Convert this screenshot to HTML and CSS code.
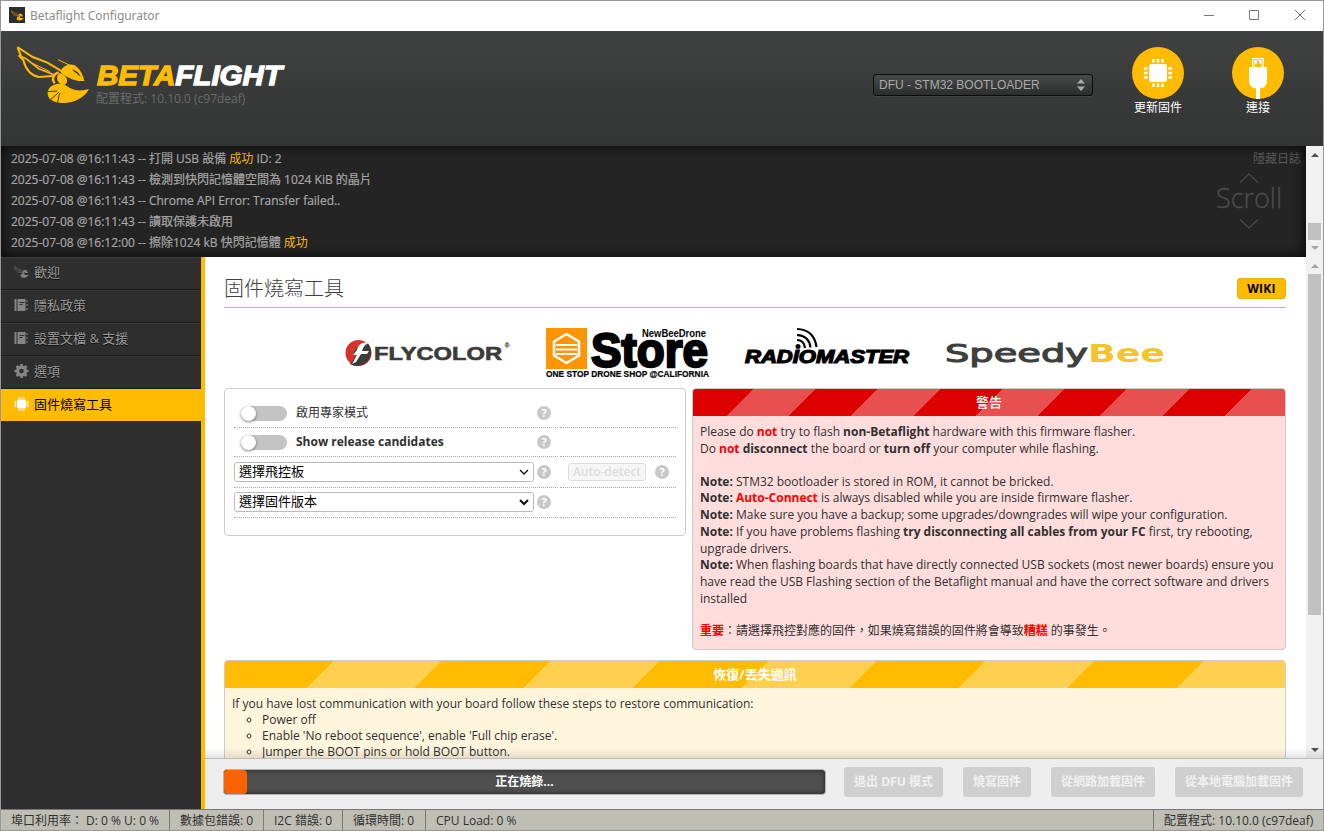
FILE: index.html
```html
<!DOCTYPE html>
<html lang="zh-Hant">
<head>
<meta charset="utf-8">
<title>Betaflight Configurator</title>
<link rel="stylesheet" href="styles.css">
</head>
<body>
<svg class="defs" aria-hidden="true">
  <symbol id="bee" viewBox="48 135 222 180">
    <g fill="none" stroke="currentColor" stroke-width="6" stroke-linejoin="miter">
      <path d="M53 143L62 166L58 168L70 180C76 205 92 226 116 231L158 228"/>
      <path d="M52 141L98 171L142 188L186 214"/>
      <path d="M60 168L78 176L116 206L162 224" stroke-width="5"/>
      <path d="M98 190L150 215" stroke-width="3"/>
      <path d="M174 179L212 197" stroke-width="3"/>
      <path d="M164 250C154 238 160 222 176 217" stroke-width="7"/>
    </g>
    <g fill="currentColor">
      <path fill-rule="evenodd" d="M186 206C200 192 218 190 230 200C243 211 250 226 253 243C236 244 220 241 207 233L190 226L182 216ZM216 209L242 230C238 219 229 210 216 209Z"/>
      <path d="M180 218L194 228C206 238 202 250 192 256C168 250 166 228 180 218Z"/>
      <path d="M143 276C148 252 178 247 194 254L210 264C226 273 246 273 267 267C254 292 226 309 188 309C160 309 140 296 143 276Z"/>
    </g>
    <g fill="none" stroke="var(--cut)" stroke-width="3"><path d="M142 275L172 273M152 299L176 277M172 310L179 280"/></g>
  </symbol>
  <symbol id="chip" viewBox="0 0 28 28">
    <rect x="5" y="5" width="18" height="18" rx="2" fill="currentColor"/>
    <path d="M9.500 0v28M14 0v28M18.500 0v28M0 9.500h28M0 14h28M0 18.500h28" stroke="currentColor" stroke-width="2.600" stroke-dasharray="3.600 20.800 3.600"/>
  </symbol>
  <symbol id="book" viewBox="0 0 14 14">
    <path fill="currentColor" d="M0 1h2v12H0zM3 1h8v12H3zM12 2h1v2h-1zM12 6h1v2h-1zM12 10h1v2h-1z"/>
    <path d="M5 4.500h5M5 6.500h3" stroke="#2e2e2e"/>
  </symbol>
  <symbol id="gear" viewBox="0 0 14 14">
    <circle cx="7" cy="7" r="3.900" fill="none" stroke="currentColor" stroke-width="3.200"/>
    <path d="M7 0v3M7 11v3M0 7h3M11 7h3M2 2l2 2M10 10l2 2M12 2l-2 2M4 10l-2 2" stroke="currentColor" stroke-width="2.600"/>
  </symbol>
</svg>
<div class="window">
  <div class="titlebar">
    <span class="app-icon"><svg><use href="#bee"/></svg></span>
    <span class="app-title">Betaflight Configurator</span>
    <svg class="win-buttons" width="104" height="12" viewBox="0 0 104 12" fill="none" stroke="#777">
      <path d="M0 6.500h10M45.500 1.500h9v9h-9zM91 1l10 10M101 1L91 11"/>
    </svg>
  </div>

  <header class="header">
    <svg class="logo-bee"><use href="#bee"/></svg>
    <div class="brand">
      <svg class="wordmark" width="190" height="25" viewBox="0 0 190 25">
        <text x="1" y="22" textLength="185" lengthAdjust="spacingAndGlyphs"><tspan fill="#ffbb00" stroke="#ffbb00">BETA</tspan><tspan fill="#fff" stroke="#fff">FLIGHT</tspan></text>
      </svg>
      <div class="version">配置程式: 10.10.0 (c97deaf)</div>
    </div>
    <div class="port"><span>DFU - STM32 BOOTLOADER</span>
      <svg width="8" height="12" viewBox="0 0 8 12" fill="#aaa"><path d="M4 0L8 4.500H0zM4 12L0 7.500h8z"/></svg>
    </div>
    <div class="action action-flash"><span class="round"><svg width="28" height="28"><use href="#chip"/></svg></span>更新固件</div>
    <div class="action"><span class="round">
      <svg width="52" height="52" viewBox="0 0 52 52"><path fill="none" stroke="#fff" stroke-width="1.300" d="M20.700 21v-9.400h10.600V21"/><path fill="none" stroke="#fff" stroke-opacity=".7" d="M22.500 20v-6.500h7V20"/><path fill="#fff" d="M22.500 14h2.500v2.500h-2.500zM27 14h2.500v2.500H27zM17 20h18v13q0 8-7 8.500V52h-4V41.500q-7-.5-7-8.500z"/></svg>
    </span>連接</div>
  </header>

  <section class="log">
    <div class="log-lines">
      <p>2025-07-08 @16:11:43 -- 打開 USB 設備 <em>成功</em> ID: 2</p>
      <p>2025-07-08 @16:11:43 -- 檢測到快閃記憶體空間為 1024 KiB 的晶片</p>
      <p>2025-07-08 @16:11:43 -- Chrome API Error: Transfer failed..</p>
      <p>2025-07-08 @16:11:43 -- 讀取保護未啟用</p>
      <p>2025-07-08 @16:12:00 -- 擦除1024 kB 快閃記憶體 <em>成功</em></p>
    </div>
    <div class="log-side">
      <span class="log-hide">隱藏日誌</span>
      <div class="log-scroll">
        <svg width="20" height="10" viewBox="0 0 20 10"><path d="M1 9.500L10 1l9 8.500"/></svg>
        <span>Scroll</span>
        <svg width="20" height="10" viewBox="0 0 20 10"><path d="M1 .5L10 9l9-8.500"/></svg>
      </div>
    </div>
    <div class="scrollbar log-bar"><i class="up dark"></i><b></b><i class="down"></i></div>
  </section>

  <div class="middle">
    <nav class="sidebar">
      <a><svg><use href="#bee"/></svg>歡迎</a>
      <a><svg><use href="#book"/></svg>隱私政策</a>
      <a><svg><use href="#book"/></svg>設置文檔 &amp; 支援</a>
      <a><svg><use href="#gear"/></svg>選項</a>
      <a class="active"><svg><use href="#chip"/></svg>固件燒寫工具</a>
    </nav>
    <main class="main">
      <div class="viewport">
        <div class="content">
          <div class="heading"><h1>固件燒寫工具</h1><span class="wiki">WIKI</span></div>
          <div class="sponsors">
            <svg width="166" height="30" viewBox="0 0 166 30">
              <circle cx="13.500" cy="15" r="13" fill="#d63426"/>
              <path fill="#3c3d3b" d="M25 9C29 18 22 28 12 28C9 28 7 27 5 26L12 17L8 16C12 9 16 4 23 5z"/>
              <path fill="#fff" d="M24 5C17 3 13 7 12 12L8 17H12L7 26L11 24L16 16H22L24 13H17Q19 6 24 5z"/>
              <text class="flycolor" x="29" y="22" textLength="128" lengthAdjust="spacingAndGlyphs">FLYCOLOR</text>
              <text class="reg" x="159.500" y="10">®</text>
            </svg>
            <svg width="164" height="51" viewBox="0 0 164 51">
              <path fill="#ff9500" d="M0 0h41v41H0z"/>
              <path fill="none" stroke="#fff" stroke-width="2.600" stroke-linejoin="round" d="M20.500 6l12.500 7.500v14L20.500 35L8 27.500v-14z"/>
              <path stroke="#fff" stroke-width="2" d="M10 17h21M10 21.500h21M10 26h21"/>
              <text class="store" x="45" y="38.500" textLength="117" lengthAdjust="spacingAndGlyphs">Store</text>
              <text class="newbee" x="96" y="8.500" textLength="64" lengthAdjust="spacingAndGlyphs">NewBeeDrone</text>
              <text class="tag" x="0" y="49" textLength="163" lengthAdjust="spacingAndGlyphs">ONE STOP DRONE SHOP @CALIFORNIA</text>
            </svg>
            <svg width="168" height="50" viewBox="0 0 168 50">
              <text class="radio" x="0" y="35" textLength="164" lengthAdjust="spacingAndGlyphs">RADIOMASTER</text>
              <circle cx="53" cy="18.500" r="2.500"/>
              <path fill="none" stroke="#000" stroke-width="2.200" d="M52 12Q59 12 60 20M52 7Q64 7.500 65.500 19.500M52 1Q69 1.500 71.500 19"/>
            </svg>
            <svg width="220" height="34" viewBox="0 0 220 34">
              <text class="speedy" x="-3" y="26" textLength="143" lengthAdjust="spacingAndGlyphs">Speedy</text>
              <text class="yellow" x="140" y="26" textLength="77" lengthAdjust="spacingAndGlyphs">Bee</text>
            </svg>
          </div>

          <div class="columns">
            <section class="options">
              <div class="row"><div class="cell"><span class="toggle"></span><span class="label">啟用專家模式</span><span class="help">?</span></div><div class="cell"></div></div>
              <div class="row"><div class="cell"><span class="toggle"></span><span class="label"><b>Show release candidates</b></span><span class="help">?</span></div><div class="cell"></div></div>
              <div class="row tall"><div class="cell"><span class="select">選擇飛控板<svg width="10" height="8" viewBox="0 0 10 8"><path d="M1 2l4 4 4-4" stroke-width="1.300"/></svg></span><span class="help">?</span></div><div class="cell"><span class="auto">Auto-detect</span><span class="help">?</span></div></div>
              <div class="row last"><div class="cell"><span class="select">選擇固件版本<svg width="10" height="8" viewBox="0 0 10 8"><path d="M1 2l4 4 4-4" stroke-width="2"/></svg></span><span class="help">?</span></div><div class="cell"></div></div>
            </section>
            <section class="note warning">
              <h2>警告</h2>
              <div class="note-body">
                <p>Please do <strong class="red">not</strong> try to flash <strong>non-Betaflight</strong> hardware with this firmware flasher.<br>
                Do <strong class="red">not</strong> <strong>disconnect</strong> the board or <strong>turn off</strong> your computer while flashing.</p>
                <p><strong>Note:</strong> STM32 bootloader is stored in ROM, it cannot be bricked.<br>
                <strong>Note:</strong> <strong class="red">Auto-Connect</strong> is always disabled while you are inside firmware flasher.<br>
                <strong>Note:</strong> Make sure you have a backup; some upgrades/downgrades will wipe your configuration.<br>
                <strong>Note:</strong> If you have problems flashing <strong>try disconnecting all cables from your FC</strong> first, try rebooting,<br>upgrade drivers.<br>
                <strong>Note:</strong> When flashing boards that have directly connected USB sockets (most newer boards) ensure you<br>have read the USB Flashing section of the Betaflight manual and have the correct software and drivers<br>installed</p>
                <p><strong class="red">重要</strong>：請選擇飛控對應的固件，如果燒寫錯誤的固件將會導致<strong class="red">糟糕</strong> 的事發生。</p>
              </div>
            </section>
          </div>
          <section class="note recovery">
            <h2>恢復/丟失通訊</h2>
            <div class="note-body">If you have lost communication with your board follow these steps to restore communication:
              <ul><li>Power off</li><li>Enable 'No reboot sequence', enable 'Full chip erase'.</li><li>Jumper the BOOT pins or hold BOOT button.</li></ul>
            </div>
          </section>
        </div>
        <div class="scrollbar main-bar"><i class="up"></i><b></b><i class="down dark"></i></div>
        <div class="fade"></div>
      </div>
      <div class="toolbar">
        <div class="progress"><span class="progress-fill"></span><span class="progress-label">正在燒錄...</span></div>
        <span class="btn b1">退出 DFU 模式</span><span class="btn b2">燒寫固件</span><span class="btn b3">從網路加載固件</span><span class="btn b4">從本地電腦加載固件</span>
      </div>
    </main>
  </div>
  <footer class="status">
    <span class="s1">埠口利用率： D: 0 % U: 0 %</span><span class="s2">數據包錯誤: 0</span><span class="s3">I2C 錯誤: 0</span><span class="s4">循環時間: 0</span><span class="s5">CPU Load: 0 %</span><span class="s6">配置程式: 10.10.0 (c97deaf)</span>
  </footer>
</div>
</body>
</html>
```
FILE: styles.css
```css
* { box-sizing: border-box; }
body { margin: 0; font: 12px/17px "Open Sans", "Noto Sans CJK TC", sans-serif; color: #303030; overflow: hidden; }
p, h1, h2, ul { margin: 0; padding: 0; }
.defs { position: absolute; width: 0; height: 0; }
.window { --cut: #3b3d3c; width: 1324px; height: 831px; border: 1px solid #9b9799; display: flex; flex-direction: column; background: #fff; }

.titlebar { height: 30px; display: flex; align-items: center; padding: 0 15px 2px 8px; color: #8c8c8c; }
.app-icon { width: 16px; height: 16px; background: #2c2c2c; color: #fb0; display: flex; align-items: center; justify-content: center; }
.app-icon svg { width: 13px; height: 11px; }
.app-title { font: 12px/16px "Noto Sans", sans-serif; margin-left: 5px; padding-top: 1px; flex: 1; letter-spacing: -.05px; }

.header { height: 115px; background: linear-gradient(#3f4241, #333434); display: flex; padding: 15px 39px 0 15px; }
.logo-bee { width: 74px; height: 60px; color: #fb0; flex: none; margin-top: -1px; }
.brand { width: 500px; padding: 17px 0 0 6px; }
.wordmark { display: block; overflow: visible; }
.wordmark text { font: italic bold 28px "Liberation Sans", sans-serif; stroke-width: 1.3px; }
.version { color: #6b6b6b; line-height: 17px; margin-top: 2px; }
.port { margin: 28px 39px 0 auto; width: 220px; height: 22px; border: 1px solid #0c0c0c; border-radius: 3px; background: linear-gradient(#484a49, #2c2e2d); color: #a9a9a9; display: flex; align-items: center; justify-content: space-between; padding: 0 7px 0 5px; font: 12px "Liberation Sans", sans-serif; box-shadow: 0 1px 0 rgba(255,255,255,.06); }
.action { width: 52px; color: #fff; text-align: center; white-space: nowrap; line-height: 18px; }
.action-flash { margin-right: 48px; }
.round { width: 52px; height: 52px; margin-top: 1px; border-radius: 50%; background: #fb0; display: flex; align-items: center; justify-content: center; }

.log { height: 111px; background: #242424; color: #a8a8a8; display: flex; position: relative; }
.log::after { content: ""; position: absolute; inset: 0 17px 0 0; box-shadow: inset 0 0 12px 2px rgba(0,0,0,.7); }
.log-lines { padding: 2px 0 0 10px; flex: 1; -webkit-text-stroke: .2px; }
.log-lines p { line-height: 21px; height: 21px; }
.log em { font-style: normal; color: #fb0; -webkit-text-stroke: 0; }
.log-side { width: 90px; display: flex; flex-direction: column; align-items: flex-end; color: #5d5d5d; padding: 4px 5px 0 0; }
.log-scroll { width: 66px; display: flex; flex-direction: column; align-items: center; margin: 6px 19px 0 0; color: #4c4c4c; }
.log-scroll svg { fill: none; stroke: #4a4a4a; stroke-width: 1.2; }
.log-scroll span { font: 300 27px/28px "Open Sans", sans-serif; padding: 1px 0 7px; -webkit-text-stroke: .3px; }

.scrollbar { width: 17px; background: #f1f1f1; display: flex; flex-direction: column; align-items: center; flex: none; }
.scrollbar b { width: 13px; background: #c1c1c1; }
.scrollbar i { border: 4px solid transparent; color: #a3a3a3; width: 0; height: 0; }
.scrollbar .dark { color: #505050; }
.scrollbar .up { border-bottom-color: currentColor; border-top: 0; }
.scrollbar .down { border-top-color: currentColor; border-bottom: 0; }
.log-bar { padding-top: 7px; }
.log-bar b { height: 17px; margin: 66px 0 6px; }
.main-bar { padding-top: 7px; }
.main-bar b { height: 341px; margin: 6px 0 133px; }

.middle { height: 552px; display: flex; }
.sidebar { width: 204px; background: #2e2e2e; border-right: 4px solid #fb0; }
.sidebar a { --cut: #2e2e2e; height: 33px; display: flex; align-items: center; padding: 0 0 3px 13px; gap: 5px; font-size: 13px; color: #999; border-bottom: 1px solid #1d1d1d; border-top: 1px solid #393939; text-shadow: 0 1px rgba(0,0,0,.7); }
.sidebar svg { width: 15px; height: 14px; color: #858585; }
.sidebar .active { height: 32px; padding-bottom: 2px; background: #fb0; color: #000; border: 0; text-shadow: none; }
.sidebar .active svg { color: #fff; }
.main { width: 1118px; display: flex; flex-direction: column; }
.viewport { height: 501px; display: flex; position: relative; overflow: hidden; }
.content { width: 1101px; padding: 20px 20px 0 19px; }
.fade { position: absolute; inset: auto 0 0 0; height: 10px; background: linear-gradient(transparent, rgba(0,0,0,.10)); }
.heading { height: 31px; border-bottom: 1px solid #fb0; display: flex; justify-content: space-between; align-items: flex-start; }
h1 { font: 300 20px/22px "Open Sans", "Noto Sans CJK TC", sans-serif; color: #404040; padding-top: 1px; }
.wiki { width: 49px; height: 21px; margin-top: 1px; border: 1px solid #e8ad10; border-radius: 3px; background: #fb0; color: #000; font-weight: 700; line-height: 20px; text-align: center; letter-spacing: .3px; }
.sponsors { height: 80px; display: flex; align-items: center; justify-content: center; gap: 35px; padding: 10px 0 0 2px; }
.sponsors svg { flex: none; overflow: visible; }
.sponsors text { font-family: "Liberation Sans", sans-serif; font-weight: bold; }
.flycolor { font-size: 18px; fill: #3c3d3b; stroke: #3c3d3b; stroke-width: .6px; }
.sponsors .reg { font-size: 7px; }
.store { font-size: 49px; stroke: #000; stroke-width: 2.4px; }
.newbee { font-size: 10.5px; }
.tag { font-size: 9px; stroke: #000; stroke-width: .2px; }
.radio { font-size: 18px; font-style: italic; stroke: #000; stroke-width: 1.2px; }
.sponsors .speedy { font-family: "DejaVu Sans", sans-serif; font-size: 25px; font-weight: 400; fill: #3e403f; stroke: #3e403f; stroke-width: 1.1px; }
.sponsors .yellow { font-family: "DejaVu Sans", sans-serif; font-size: 25px; fill: #f5c42c; }
.columns { display: flex; align-items: flex-start; gap: 6px; }
.options { width: 462px; height: 148px; border: 1px solid #ccc; border-radius: 4px; padding: 10px 9px 0; }
.row { display: grid; grid-template-columns: 324px 116px; gap: 2px; height: 30px; }
.row:nth-child(1), .row:nth-child(2) { height: 29px; }
.row.tall { height: 31px; }
.cell { display: flex; align-items: center; border-bottom: 1px dotted #aaa; }
.tall .cell { padding-bottom: 1px; }
.last .cell { padding-bottom: 2px; }
.toggle { width: 46px; height: 15px; margin: 1px 9px 0 7px; border-radius: 8px; background: #c4c4c4; }
.toggle::before { content: ""; display: block; width: 15px; height: 15px; border-radius: 50%; background: #fff; box-shadow: 0 1px 3px rgba(0,0,0,.5); }
.label { width: 241px; margin-top: -1px; }
.help { width: 14px; height: 14px; border-radius: 50%; background: #c8c8c8; color: #fff; font-weight: 700; font-size: 11px; line-height: 14px; text-align: center; }
.select { width: 300px; height: 20px; border: 1px solid #bbb; border-radius: 3px; display: flex; align-items: center; justify-content: space-between; padding: 0 4px; margin-right: 3px; color: #000; font-size: 13px; }
.select svg { fill: none; stroke: #111; }
.auto { width: 78px; height: 18px; margin: 0 9px 0 8px; border: 1px solid #ddd; border-radius: 3px; background: #f6f6f6; color: #ddd; text-align: center; line-height: 16px; font-weight: 600; }
.note { border: 1px solid #ccc; border-radius: 4px; overflow: hidden; }
.note h2 { height: 27px; font-size: 13px; line-height: 27px; color: #fff; text-align: center; }
.note-body { padding: 8px 7px; letter-spacing: -.012px; }
.warning { width: 594px; height: 262px; background: #fdd; }
.warning .note-body { padding-top: 7px; }
.warning h2 { font-weight: 500; background: repeating-linear-gradient(135deg, #d00 -1.2px 42.8px, #e85050 42.8px 86.8px); }
.warning p { line-height: 16.75px; margin-bottom: 15.5px; white-space: nowrap; }
.warning p:first-child { line-height: 17px; margin-bottom: 16.5px; }
.red { color: #f00; }
.recovery { margin-top: 10px; height: 160px; background: #fff5dd; }
.recovery h2 { background: repeating-linear-gradient(135deg, #fb0 -.5px 76.4px, #ffd04f 76.4px 153.3px); }
.recovery .note-body { line-height: 16px; }
.recovery ul { padding-left: 30px; list-style: circle; }

.toolbar { height: 51px; background: #eee; border-top: 1px solid #bbb; display: flex; align-items: flex-start; padding: 8px 0 0 18px; }
.progress { width: 603px; height: 26px; margin: 2px 18px 0 0; border: 1px solid #b5b5b5; border-radius: 4px; background: #4f4f4f; box-shadow: inset 0 0 5px rgba(0,0,0,.6); display: grid; overflow: hidden; }
.progress-fill, .progress-label { grid-area: 1 / 1; }
.progress-fill { width: 23px; background: #f96306; border-radius: 4px; }
.progress-label { color: #fff; font-weight: 700; text-align: center; line-height: 23px; }
.btn { height: 30px; border-radius: 3px; background: #cfcfcf; color: #f1f1f1; font-weight: 700; line-height: 30px; text-align: center; margin-right: 20px; white-space: nowrap; }
.b1 { width: 99px; }
.b2 { width: 68px; }
.b3 { width: 104px; }
.b4 { width: 128px; margin-right: 0; }

.status { height: 21px; border-top: 1px solid #777; background: #bfbeb5; display: flex; line-height: 22px; white-space: nowrap; }
.status span { padding-left: 10px; border-right: 1px solid #7b7b78; height: 20px; }
.s1 { width: 169px; }
.s2 { width: 94px; }
.s3 { width: 79px; }
.s4 { width: 83px; }
.status .s5 { flex: 1; }
.status .s6 { width: 169px; border-right: 0; }
```
